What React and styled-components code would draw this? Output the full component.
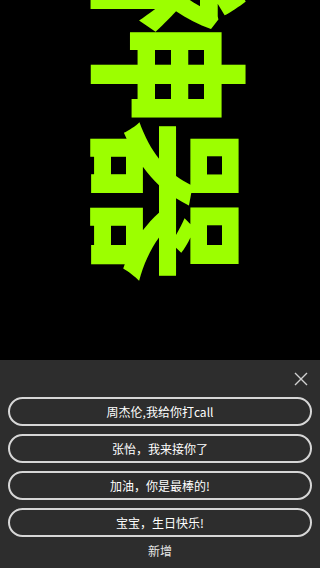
import React from 'react';
import styled, { createGlobalStyle } from 'styled-components'

const GlobalStyle = createGlobalStyle`
  html, body {
    margin: 0;
    padding: 0;
    background: #000;
  }
  body {
    font-family: "Noto Sans CJK SC", "Noto Sans", sans-serif;
  }
`

const Screen = styled.div`
  width: 320px;
  height: 568px;
  display: flex;
  flex-direction: column;
  overflow: hidden;
`

const Stage = styled.div`
  flex: 1;
  background: #000;
  display: flex;
  align-items: center;
  justify-content: center;
  overflow: hidden;
`

// the marquee text runs top to bottom, so the line is turned a quarter
const BigText = styled.div`
  color: #9cff00;
  font-size: 164px;
  font-weight: 700;
  line-height: 1;
  letter-spacing: -9px;
  white-space: nowrap;
  transform: translate(17px, -61px) rotate(90deg);
`

const Panel = styled.div`
  height: 208px;
  background: #2d2d2d;
  display: flex;
  flex-direction: column;
  padding: 8px 8px 0;
  box-sizing: border-box;
`

const TopRow = styled.div`
  display: flex;
  justify-content: flex-end;
  height: 22px;
  margin-bottom: 7px;
`

const CloseBtn = styled.button`
  background: none;
  border: none;
  padding: 0;
  width: 22px;
  height: 22px;
  display: flex;
  align-items: center;
  justify-content: center;
  cursor: pointer;
`

const List = styled.div`
  display: flex;
  flex-direction: column;
  gap: 8px;
`

const Item = styled.button`
  height: 29px;
  border: 2px solid #d6d6d6;
  border-radius: 15px;
  background: transparent;
  color: #fff;
  font-family: "Noto Sans CJK SC", "Noto Sans", sans-serif;
  font-size: 12px;
  display: flex;
  align-items: center;
  justify-content: center;
  padding: 0;
`

const AddBtn = styled.div`
  text-align: center;
  color: #e6e6e6;
  font-size: 12px;
  margin-top: 5px;
`

const phrases = [
  '周杰伦,我给你打call',
  '张怡，我来接你了',
  '加油，你是最棒的!',
  '宝宝，生日快乐!'
]

class App extends React.Component {
  render() {
    return (
      <Screen>
        <GlobalStyle />
        <Stage>
          <BigText>神器</BigText>
        </Stage>
        <Panel>
          <TopRow>
            <CloseBtn>
              <svg width="14" height="14" viewBox="0 0 14 14">
                <path d="M1 1 L13 13 M13 1 L1 13" stroke="#d0d0d0" strokeWidth="1.4" />
              </svg>
            </CloseBtn>
          </TopRow>
          <List>
            {phrases.map((p, i) => <Item key={i}>{p}</Item>)}
          </List>
          <AddBtn>新增</AddBtn>
        </Panel>
      </Screen>
    );
  }
}

export default App;
